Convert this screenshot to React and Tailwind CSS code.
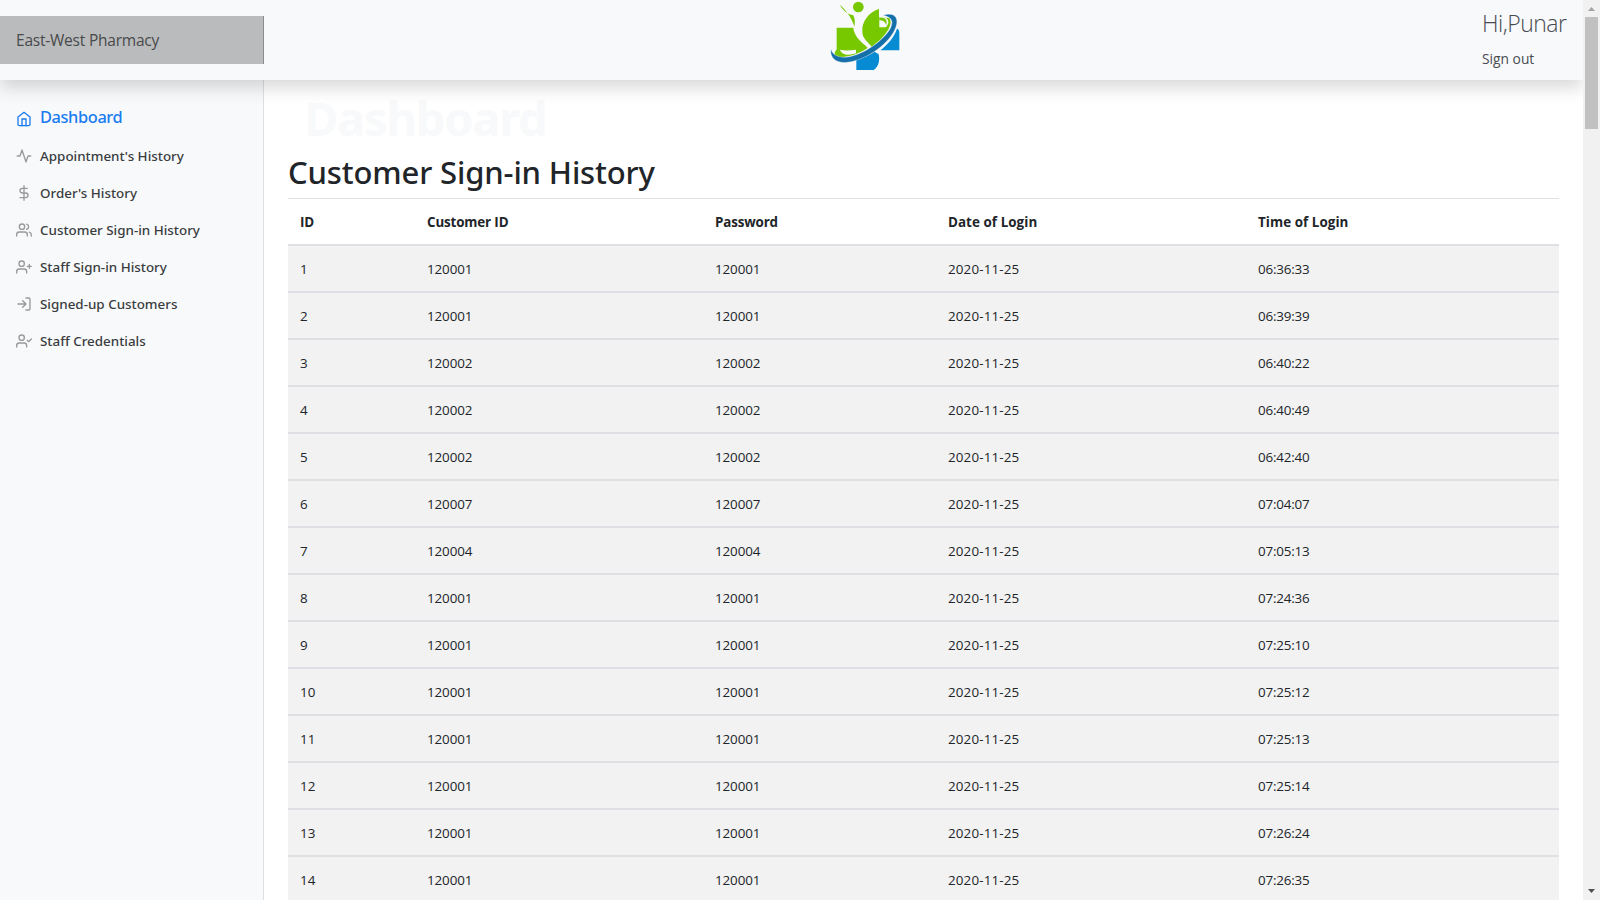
const rows = [
  ['1', '120001', '06:36:33'],
  ['2', '120001', '06:39:39'],
  ['3', '120002', '06:40:22'],
  ['4', '120002', '06:40:49'],
  ['5', '120002', '06:42:40'],
  ['6', '120007', '07:04:07'],
  ['7', '120004', '07:05:13'],
  ['8', '120001', '07:24:36'],
  ['9', '120001', '07:25:10'],
  ['10', '120001', '07:25:12'],
  ['11', '120001', '07:25:13'],
  ['12', '120001', '07:25:14'],
  ['13', '120001', '07:26:24'],
  ['14', '120001', '07:26:35'],
]

const icons = {
  home: <><path d="M3 9l9-7 9 7v11a2 2 0 0 1-2 2H5a2 2 0 0 1-2-2z" /><path d="M9 22V12h6v10" /></>,
  activity: <path d="M22 12h-4l-3 9L9 3l-3 9H2" />,
  dollar: <><path d="M12 1v22" /><path d="M17 5H9.5a3.5 3.5 0 0 0 0 7h5a3.5 3.5 0 0 1 0 7H6" /></>,
  users: <><path d="M17 21v-2a4 4 0 0 0-4-4H5a4 4 0 0 0-4 4v2" /><circle cx="9" cy="7" r="4" /><path d="M23 21v-2a4 4 0 0 0-3-3.87M16 3.13a4 4 0 0 1 0 7.75" /></>,
  userPlus: <><path d="M16 21v-2a4 4 0 0 0-4-4H5a4 4 0 0 0-4 4v2" /><circle cx="8.5" cy="7" r="4" /><path d="M20 8v6M23 11h-6" /></>,
  logIn: <><path d="M15 3h4a2 2 0 0 1 2 2v14a2 2 0 0 1-2 2h-4" /><path d="M10 17l5-5-5-5M15 12H3" /></>,
  userCheck: <><path d="M16 21v-2a4 4 0 0 0-4-4H5a4 4 0 0 0-4 4v2" /><circle cx="8.5" cy="7" r="4" /><path d="M17 11l2 2 4-4" /></>,
}

const links = [
  ['activity', "Appointment's History"],
  ['dollar', "Order's History"],
  ['users', 'Customer Sign-in History'],
  ['userPlus', 'Staff Sign-in History'],
  ['logIn', 'Signed-up Customers'],
  ['userCheck', 'Staff Credentials'],
]

function Icon({ name, className }) {
  return (
    <svg viewBox="0 0 24 24" fill="none" stroke="currentColor" strokeWidth="2" strokeLinecap="round" strokeLinejoin="round" className={`size-4 shrink-0 ${className}`}>
      {icons[name]}
    </svg>
  )
}

function Logo() {
  return (
    <svg viewBox="0 0 270 225" className="h-[75px] w-[90px] shrink-0">
      <circle cx="115" cy="21" r="16" fill="#78c800" />
      <path d="M59 14C68 30 83 43 99 45C106 57 105 70 103 80C96 54 78 30 59 14Z" fill="#78c800" />
      <path d="M50 83H100C101 104 119 123 137 137L143 144C120 160 84 173 56 171C42 169 41 158 50 148Z" fill="#78c800" />
      <path d="M127 95C124 64 149 35 177 27V52L208 54C222 73 195 113 155 140C145 126 127 116 127 95Z" fill="#78c800" />
      <path d="M60 149C76 153 92 151 108 149V160C88 166 66 167 60 149Z" fill="#f8f9fb" />
      <path d="M178 53C192 49 205 54 205 67C205 74 200 80 197 82H178Z" fill="#f8f9fb" />
      <path d="M178 54C194 51 203 58 199 76C195 64 188 61 178 61Z" fill="#78c800" />
      <path d="M231 86C238 88 238 96 238 102V151H181C203 134 222 112 231 86Z" fill="#078bd2" />
      <path d="M109 178C129 174 148 165 164 155L176 163C180 181 176 201 161 210H109Z" fill="#078bd2" />
      <path d="M188 46C220 35 238 50 228 80C212 128 143 179 82 187C50 191 28 174 33 147C37 164 54 174 82 171C134 164 195 117 212 83C222 61 212 50 188 46Z" fill="#156fa8" stroke="#f8f9fb" strokeWidth="1" />
    </svg>
  )
}

export default function App() {
  return (
    <div className="flex h-[900px] w-[1600px] overflow-hidden bg-white font-['Open_Sans','Noto_Sans',sans-serif] text-[#212529]">
      <div className="flex w-[1583px] shrink-0 flex-col overflow-hidden">
        <header className="relative z-10 flex h-20 shrink-0 items-center bg-[#f8f9fb] shadow-[0_8px_16px_rgba(0,0,0,0.15)]">
          <div className="flex h-12 w-[264px] shrink-0 items-center bg-[#babbbc] pl-4 pt-[2px] text-[15.5px] tracking-[-0.22px] text-[#484a4c] shadow-[inset_-1px_0_0_rgba(0,0,0,0.25)]">
            East-West Pharmacy
          </div>
          <div className="ml-[556px] flex self-start">
            <Logo />
          </div>
          <div className="ml-auto flex w-[101px] shrink-0 flex-col self-start whitespace-nowrap pt-[9px]">
            <span className="text-[23px] font-light leading-[28px] tracking-[-0.5px] text-[#484c50]">Hi,Punar</span>
            <span className="mt-[11px] text-[13.8px] leading-[21px] text-[#484c50]">Sign out</span>
          </div>
        </header>

        <div className="flex min-h-0 flex-1">
          <nav className="flex w-[264px] shrink-0 flex-col bg-[#f8f9fb] pt-[18px] font-['Noto_Sans',sans-serif] font-medium shadow-[inset_-1px_0_0_rgba(0,0,0,0.1)]">
            <a className="flex h-[39px] items-center gap-2 pl-4 text-[16.4px] tracking-[-0.4px] text-[#1a7cf0]">
              <Icon name="home" className="mt-[2px]" />
              <span>Dashboard</span>
            </a>
            {links.map(([icon, label]) => (
              <a key={label} className="flex h-[37px] items-center gap-2 pl-4 text-[13.4px] text-[#3a3d40]">
                <Icon name={icon} className="mt-px text-[#999]" />
                <span className="pt-[2px]">{label}</span>
              </a>
            ))}
          </nav>

          <main className="flex min-w-0 flex-1 flex-col overflow-hidden px-6">
            <div className="mt-[10px] h-[58px] shrink-0 pl-4 font-['Noto_Sans',sans-serif] text-[47px] font-bold leading-[56px] tracking-[-1.25px] text-[#f8f9fa]">Dashboard</div>
            <h2 className="mt-[4px] h-[46px] shrink-0 font-['Noto_Sans',sans-serif] text-[31px] font-medium leading-[40px] tracking-[-0.14px]">Customer Sign-in History</h2>
            <table className="w-[1271px] table-fixed border-collapse text-left">
              <colgroup>
                <col className="w-[127px]" />
                <col className="w-[288px]" />
                <col className="w-[233px]" />
                <col className="w-[310px]" />
                <col className="w-[313px]" />
              </colgroup>
              <thead>
                <tr className="h-[46px] text-[13.4px] leading-[21px] shadow-[inset_0_1px_0_#dee2e6]">
                  {['ID', 'Customer ID', 'Password', 'Date of Login', 'Time of Login'].map((h) => (
                    <th key={h} className={`px-3 py-0 pt-[3px] font-bold ${h.includes('Login') ? 'tracking-[0.06px]' : 'tracking-[-0.15px]'}`}>{h}</th>
                  ))}
                </tr>
              </thead>
              <tbody>
                {rows.map(([id, customer, time]) => (
                  <tr key={id} className="h-[47px] bg-[#f2f2f2] text-[13.4px] leading-[21px] shadow-[inset_0_2px_0_#dee0e3]">
                    <td className="px-3 py-0 pt-[4px]">{id}</td>
                    <td className="px-3 py-0 pt-[4px] tracking-[-0.1px]">{customer}</td>
                    <td className="px-3 py-0 pt-[4px] tracking-[-0.1px]">{customer}</td>
                    <td className="px-3 py-0 pt-[4px] tracking-[0.15px]">2020-11-25</td>
                    <td className="px-3 py-0 pt-[4px] tracking-[-0.2px]">{time}</td>
                  </tr>
                ))}
              </tbody>
            </table>
          </main>
        </div>
      </div>

      <div className="flex w-[17px] shrink-0 flex-col items-center bg-[#f1f1f1]">
        <svg viewBox="0 0 17 17" className="size-[17px] shrink-0"><path d="M5 11L8.5 7L12 11Z" fill="#a3a3a3" /></svg>
        <div className="h-[112px] w-[13px] bg-[#c1c1c1]" />
        <svg viewBox="0 0 17 17" className="mt-auto size-[17px] shrink-0"><path d="M5 6L8.5 10L12 6Z" fill="#505050" /></svg>
      </div>
    </div>
  )
}
